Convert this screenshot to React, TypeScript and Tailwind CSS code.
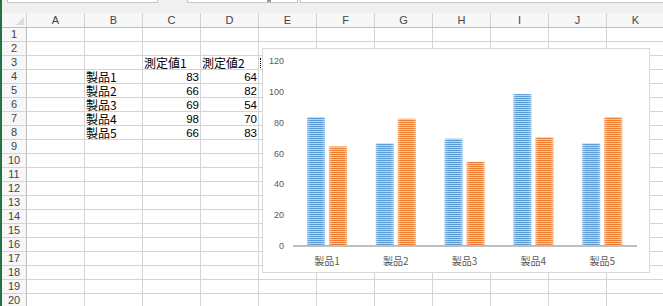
import React from "react";

const COLS = ["A", "B", "C", "D", "E", "F", "G", "H", "I", "J", "K"];
const S1 = [83, 66, 69, 98, 66];
const S2 = [64, 82, 54, 70, 83];

type CellMap = Record<string, { t: string; r?: boolean; dots?: boolean }>;
const cells: Record<number, CellMap> = {
  3: { C: { t: "測定値1" }, D: { t: "測定値2" }, E: { t: "", dots: true } },
};
S1.forEach((v, i) => {
  cells[4 + i] = {
    B: { t: `製品${i + 1}` },
    C: { t: String(v), r: true },
    D: { t: String(S2[i]), r: true },
  };
});

const cellFont = { fontFamily: "'Noto Sans CJK JP', sans-serif" };
const numFont = { fontFamily: "'Liberation Sans', sans-serif" };
const hdrFont = { fontFamily: "'Liberation Sans', sans-serif" };

function Chart() {
  const base = 197;
  const k = 1.54;
  const step = 68.8;
  return (
    <svg width="388" height="225" className="block">
      <defs>
        <pattern id="pb" width="4" height="2" patternUnits="userSpaceOnUse">
          <rect x="0" y="0" width="4" height="2" fill="#bcd5ee" />
          <rect x="0" y="0" width="4" height="1" fill="#5b9bd5" />
        </pattern>
        <pattern id="po" width="4" height="2" patternUnits="userSpaceOnUse">
          <rect x="0" y="0" width="4" height="2" fill="#f8c6a4" />
          <rect x="0" y="0" width="4" height="1" fill="#ed7d31" />
        </pattern>
        <linearGradient id="edge" x1="0" x2="1" y1="0" y2="0">
          <stop offset="0" stopColor="#fff" stopOpacity="0.3" />
          <stop offset="0.18" stopColor="#fff" stopOpacity="0" />
          <stop offset="0.82" stopColor="#fff" stopOpacity="0" />
          <stop offset="1" stopColor="#fff" stopOpacity="0.3" />
        </linearGradient>
      </defs>
      <rect x="0.5" y="0.5" width="387" height="224" fill="#ffffff" stroke="#d9d9d9" />
      {[0, 20, 40, 60, 80, 100, 120].map((v) => (
        <text
          key={v}
          x="22"
          y={base - v * k + 1}
          textAnchor="end"
          dominantBaseline="central"
          fontSize="9"
          fill="#595959"
          fontFamily="'Liberation Sans', sans-serif"
        >
          {v}
        </text>
      ))}
      {S1.map((v, i) => {
        const x1 = 45 + step * i;
        const x2 = 67 + step * i;
        const h1 = v * k;
        const h2 = S2[i] * k;
        return (
          <g key={i}>
            <rect x={x1} y={base - h1} width="18" height={h1} fill="url(#pb)" />
            <rect x={x1} y={base - h1} width="18" height={h1} fill="url(#edge)" />
            <rect x={x2} y={base - h2} width="18" height={h2} fill="url(#po)" />
            <rect x={x2} y={base - h2} width="18" height={h2} fill="url(#edge)" />
            <text
              x={65 + step * i}
              y="212"
              textAnchor="middle"
              dominantBaseline="central"
              fontSize="10"
              fill="#595959"
              fontFamily="'Noto Sans CJK JP', sans-serif"
            >
              {`製品${i + 1}`}
            </text>
          </g>
        );
      })}
      <rect x="31" y="197" width="344" height="2" fill="#bfbfbf" />
    </svg>
  );
}

export default function App() {
  const rows = Array.from({ length: 20 }, (_, i) => i + 1);
  return (
    <div className="relative flex h-[306px] w-[663px] overflow-hidden bg-white">
      <div className="w-[2px] flex-none bg-[#217346]" />
      <div className="flex min-w-0 flex-1 flex-col">
        {/* formula bar remnant */}
        <div className="flex h-[13px] flex-none items-start bg-[#f0f0f0]">
          <div className="ml-[5px] h-[3px] w-[151px] flex-none border-x border-b border-[#c6c6c6] bg-white" />
          <div className="relative ml-[29px] h-[3px] w-[111px] flex-none border-x border-b border-[#c6c6c6] bg-white">
            <div className="absolute left-[79px] top-0 h-[2px] w-[4px] bg-[#9a9a9a]" />
          </div>
          <div className="ml-[2px] h-[3px] flex-1 border-l border-b border-[#c6c6c6] bg-white" />
        </div>
        {/* column header */}
        <div className="flex h-[15px] flex-none border-b border-[#bdbdbd] bg-[#f7f7f7]" style={hdrFont}>
          <div className="relative flex w-[25px] flex-none items-end justify-end border-r border-[#d4d4d4] pb-[1px] pr-[1px]">
            <svg width="8" height="8" className="mb-[1px] mr-[1px]">
              <polygon points="8,0 8,8 0,8" fill="#dcdcdc" />
            </svg>
          </div>
          {COLS.map((c) => (
            <div
              key={c}
              className="flex w-[58px] flex-none items-center justify-center border-r border-[#d4d4d4] text-[11px] leading-none text-[#444444]"
            >
              {c}
            </div>
          ))}
        </div>
        {rows.map((r) => (
          <div key={r} className="flex h-[14px] flex-none">
            <div
              className="flex w-[25px] flex-none items-center justify-center border-b border-r border-b-[#d4d4d4] border-r-[#bdbdbd] bg-[#f7f7f7] text-[11px] leading-none text-[#444444]"
              style={hdrFont}
            >
              {r}
            </div>
            {COLS.map((c) => {
              const cell = cells[r]?.[c];
              if (cell?.r) {
                return (
                  <div
                    key={c}
                    className="flex w-[58px] flex-none items-end justify-end whitespace-nowrap border-b border-r border-[#d4d4d4] px-[1px] text-[11.5px] leading-[12px] text-black"
                    style={numFont}
                  >
                    {cell.t}
                  </div>
                );
              }
              return (
                <div
                  key={c}
                  className="flex w-[58px] flex-none items-end justify-start whitespace-nowrap border-b border-r border-[#d4d4d4] px-[1px] text-[12px] leading-[13px] text-black"
                  style={cellFont}
                >
                  {cell?.dots ? (
                    <div className="mb-[1px] h-[10px] w-0 border-l border-dotted border-black" />
                  ) : (
                    cell?.t ?? ""
                  )}
                </div>
              );
            })}
          </div>
        ))}
      </div>
      <div className="absolute left-[262px] top-[48px]">
        <Chart />
      </div>
    </div>
  );
}
